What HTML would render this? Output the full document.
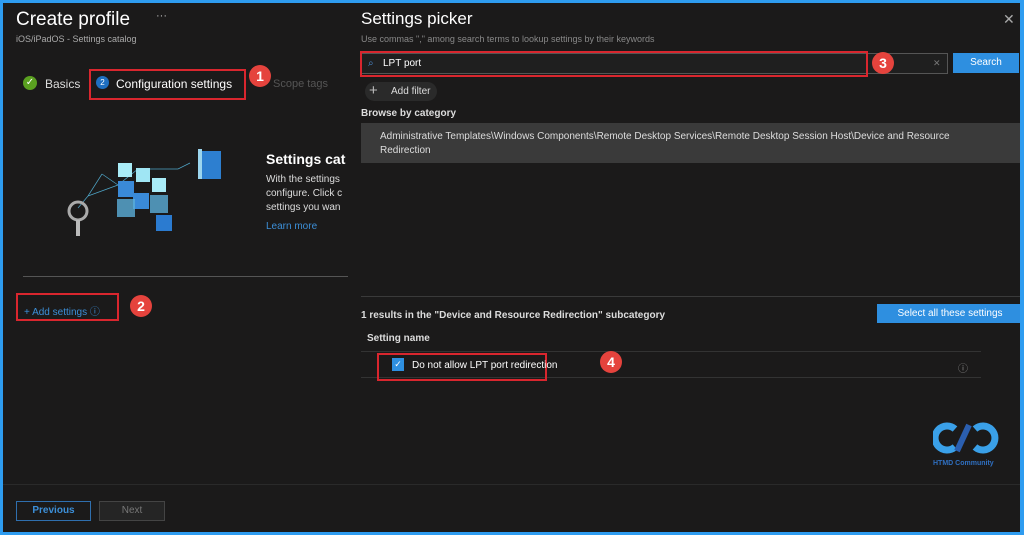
<!DOCTYPE html>
<html><head><meta charset="utf-8"><style>
*{margin:0;padding:0;box-sizing:border-box}
body{width:1024px;height:535px;background:#2e9cf0;font-family:"Liberation Sans",sans-serif;overflow:hidden;position:relative}
#main{position:absolute;left:3px;top:3px;width:1017px;height:529px;background:#1b1a1a;overflow:hidden}
.a{position:absolute;white-space:nowrap}
.red{position:absolute;border:2px solid #d9262e}
.num{position:absolute;width:22px;height:22px;border-radius:50%;background:#e5433d;color:#fff;font-size:14px;font-weight:bold;text-align:center;line-height:22px}
</style></head><body><div id="main">
<div class="a" style="left:13px;top:6px;font-size:19px;color:#fff">Create profile</div>
<div class="a" style="left:153px;top:7px;font-size:11px;color:#bbb">···</div>
<div class="a" style="left:13px;top:31px;font-size:9px;color:#aaa">iOS/iPadOS - Settings catalog</div>
<div class="a" style="left:20px;top:73px;width:14px;height:14px;border-radius:50%;background:#5aa020;color:#fff;font-size:10px;text-align:center;line-height:14px">✓</div>
<div class="a" style="left:42px;top:74px;font-size:12px;color:#ddd">Basics</div>
<div class="red" style="left:86px;top:66px;width:157px;height:31px"></div>
<div class="a" style="left:93px;top:73px;width:13px;height:13px;border-radius:50%;background:#1f6fc0;color:#fff;font-size:8px;text-align:center;line-height:13px">2</div>
<div class="a" style="left:113px;top:74px;font-size:12px;color:#fff">Configuration settings</div>
<div class="num" style="left:246px;top:62px">1</div>
<div class="a" style="left:270px;top:75px;font-size:11px;color:#555">Scope tags</div>
<svg class="a" style="left:55px;top:140px" width="170" height="100">
<g stroke="#4fa6c8" stroke-width="0.7" fill="none"><path d="M44 31L30 53L20 65M44 31L60 42M60 42L80 26L120 26L132 20M30 53L60 42"/></g>
<rect x="60" y="20" width="14" height="14" fill="#a9ecf7"/><rect x="78" y="25" width="14" height="14" fill="#a0e6f4"/><rect x="94" y="35" width="14" height="14" fill="#a9ecf7"/>
<rect x="60" y="38" width="16" height="16" fill="#3a8ad8"/><rect x="75" y="50" width="16" height="16" fill="#3a8ad8"/><rect x="59" y="56" width="18" height="18" fill="#5baed8" opacity=".8"/><rect x="92" y="52" width="18" height="18" fill="#5baed8" opacity=".8"/><rect x="98" y="72" width="16" height="16" fill="#2b7bd0"/>
<rect x="143" y="8" width="20" height="28" fill="#2d7fd0"/><rect x="140" y="6" width="4" height="30" fill="#9cd5ee"/>
<circle cx="20" cy="68" r="9" fill="none" stroke="#aaa" stroke-width="3"/><rect x="18" y="77" width="4" height="16" fill="#bbb"/>
</svg>
<div class="a" style="left:263px;top:148px;font-size:14px;font-weight:bold;color:#fff">Settings cat</div>
<div class="a" style="left:263px;top:170px;font-size:10px;color:#ddd;line-height:14px">With the settings<br>configure. Click c<br>settings you wan</div>
<div class="a" style="left:263px;top:218px;font-size:10px;color:#3c8fd8">Learn more</div>
<div class="a" style="left:20px;top:273px;width:325px;height:1px;background:#555"></div>
<div class="red" style="left:13px;top:290px;width:103px;height:28px"></div>
<div class="a" style="left:21px;top:300px;font-size:10px;color:#3c8fd8">+ Add settings ⓘ</div>
<div class="num" style="left:127px;top:292px">2</div>
<div class="a" style="left:0;top:481px;width:358px;height:1px;background:#2a2a2a"></div>
<div class="a" style="left:13px;top:498px;width:75px;height:20px;border:1px solid #2f6fae;color:#3c8fd8;font-size:10px;font-weight:bold;text-align:center;line-height:18px">Previous</div>
<div class="a" style="left:96px;top:498px;width:66px;height:20px;border:1px solid #444;background:#252525;color:#777;font-size:10px;text-align:center;line-height:18px">Next</div>

<div class="a" style="left:358px;top:6px;font-size:17px;color:#fff">Settings picker</div>
<div class="a" style="left:1000px;top:8px;font-size:14px;color:#aaa">✕</div>
<div class="a" style="left:358px;top:31px;font-size:9px;color:#888">Use commas "," among search terms to lookup settings by their keywords</div>
<div class="a" style="left:358px;top:50px;width:587px;height:21px;border:1px solid #555;background:#1f1f1f"></div>
<div class="red" style="left:357px;top:48px;width:508px;height:26px"></div>
<div class="a" style="left:365px;top:55px;font-size:10px;color:#4a8ad0">⌕</div>
<div class="a" style="left:380px;top:55px;font-size:10px;color:#fff">LPT port</div>
<div class="num" style="left:869px;top:49px">3</div>
<div class="a" style="left:930px;top:55px;font-size:9px;color:#777">✕</div>
<div class="a" style="left:950px;top:50px;width:66px;height:20px;background:#2e8fe0;color:#fff;font-size:10px;text-align:center;line-height:20px">Search</div>
<div class="a" style="left:362px;top:79px;width:72px;height:19px;border-radius:10px;background:#2a2a2a"></div>
<div class="a" style="left:366px;top:79px;font-size:15px;color:#bbb">+</div>
<div class="a" style="left:388px;top:83px;font-size:10px;color:#ddd">Add filter</div>
<div class="a" style="left:358px;top:105px;font-size:10px;font-weight:bold;color:#ddd">Browse by category</div>
<div class="a" style="left:358px;top:120px;width:662px;height:40px;background:#3a3a3a"></div>
<div class="a" style="left:377px;top:127px;font-size:10px;color:#ddd;line-height:14px">Administrative Templates\Windows Components\Remote Desktop Services\Remote Desktop Session Host\Device and Resource<br>Redirection</div>
<div class="a" style="left:358px;top:293px;width:662px;height:1px;background:#3a3a3a"></div>
<div class="a" style="left:358px;top:307px;font-size:10px;font-weight:bold;color:#ddd">1 results in the "Device and Resource Redirection" subcategory</div>
<div class="a" style="left:874px;top:301px;width:146px;height:19px;background:#2e8fe0;color:#fff;font-size:10px;text-align:center;line-height:19px">Select all these settings</div>
<div class="a" style="left:364px;top:330px;font-size:10px;font-weight:bold;color:#ddd">Setting name</div>
<div class="a" style="left:358px;top:348px;width:620px;height:1px;background:#333"></div>
<div class="a" style="left:358px;top:374px;width:620px;height:1px;background:#333"></div>
<div class="red" style="left:374px;top:350px;width:170px;height:28px"></div>
<div class="a" style="left:389px;top:355px;width:12px;height:13px;background:#2e8fe0;color:#fff;font-size:9px;text-align:center;line-height:13px">✓</div>
<div class="a" style="left:409px;top:357px;font-size:10px;color:#fff">Do not allow LPT port redirection</div>
<div class="num" style="left:597px;top:348px">4</div>
<div class="a" style="left:955px;top:357px;font-size:10px;color:#888">ⓘ</div>
<svg class="a" style="left:930px;top:418px" width="70" height="34"><path d="M22 8 A12 12 0 1 0 22 26" stroke="#3aa0e8" stroke-width="7" fill="none"/><path d="M42 8 A12 12 0 1 1 42 26" stroke="#3aa0e8" stroke-width="7" fill="none"/><path d="M24 30 L36 4" stroke="#2b5fb0" stroke-width="6"/></svg>
<div class="a" style="left:930px;top:457px;font-size:7px;font-weight:bold;color:#2f6fc0">HTMD Community</div>
<div class="a" style="left:358px;top:481px;width:662px;height:1px;background:#2a2a2a"></div>
</div></body></html>
